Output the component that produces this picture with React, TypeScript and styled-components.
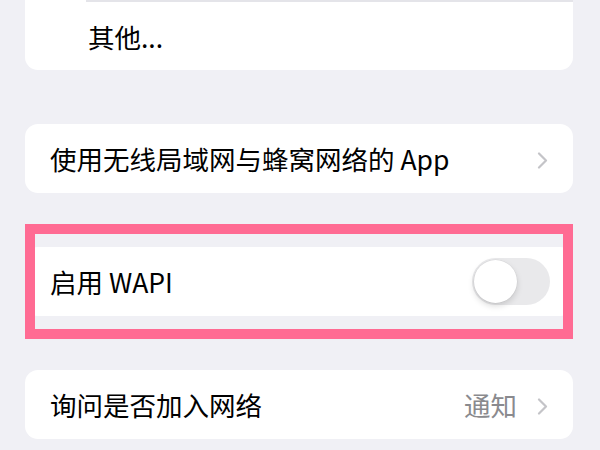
import styled, { createGlobalStyle } from "styled-components";

const GlobalStyle = createGlobalStyle`
  html, body {
    margin: 0;
    padding: 0;
    background: #f0f0f5;
    font-family: "Noto Sans CJK SC", "Noto Sans", sans-serif;
    color: #000;
  }
`;

const Page = styled.div`
  width: 600px;
  height: 450px;
  overflow: hidden;
  display: flex;
  flex-direction: column;
  gap: 54px;
  padding: 0 27px 0 25px;
  box-sizing: border-box;
`;

const Card = styled.div<{ $cutTop?: boolean }>`
  background: #ffffff;
  border-radius: ${(p) => (p.$cutTop ? "0 0 13px 13px" : "13px")};
  overflow: hidden;
`;

const Row = styled.div`
  height: 69px;
  display: flex;
  align-items: center;
  padding: 0 25px;
  box-sizing: border-box;
`;

const NestedRow = styled(Row)`
  height: 70px;
  margin-left: 61px;
  padding-left: 2px;
  border-top: 2px solid #e4e4e9;
`;

const Label = styled.span`
  flex: 1;
  font-size: 26.5px;
  line-height: 1;
  padding-top: 2px;
`;

const Value = styled.span`
  font-size: 26.5px;
  line-height: 1;
  color: #8a8a8e;
  margin-right: 20px;
  padding-top: 2px;
`;

const Chevron = () => (
  <svg width="11" height="17" viewBox="0 0 11 17" style={{ marginTop: 3 }}>
    <path
      d="M2 1.5 L9 8.5 L2 15.5"
      fill="none"
      stroke="#c4c4c8"
      strokeWidth="2.2"
      strokeLinecap="round"
      strokeLinejoin="round"
    />
  </svg>
);

const Highlight = styled.div`
  position: relative;
  &::after {
    content: "";
    position: absolute;
    left: 0;
    right: 0;
    top: -23px;
    bottom: -23px;
    border: 10px solid #ff6b93;
    pointer-events: none;
  }
`;

const Toggle = styled.div<{ $on?: boolean }>`
  width: 78px;
  height: 47px;
  border-radius: 24px;
  background: ${(p) => (p.$on ? "#34c759" : "#e9e9eb")};
  position: relative;
  margin-right: -2px;
  &::before {
    content: "";
    position: absolute;
    top: 2px;
    left: ${(p) => (p.$on ? "33px" : "2px")};
    width: 43px;
    height: 43px;
    border-radius: 50%;
    background: #fff;
    box-shadow: 0 3px 6px rgba(0, 0, 0, 0.15), 0 0 0 0.5px rgba(0, 0, 0, 0.06);
  }
`;

export default function App() {
  return (
    <>
      <GlobalStyle />
      <Page>
        <Card $cutTop>
          <NestedRow>
            <Label>其他...</Label>
          </NestedRow>
        </Card>
        <Card>
          <Row>
            <Label>使用无线局域网与蜂窝网络的 App</Label>
            <Chevron />
          </Row>
        </Card>
        <Highlight>
          <Card>
            <Row>
              <Label>启用 WAPI</Label>
              <Toggle />
            </Row>
          </Card>
        </Highlight>
        <Card>
          <Row>
            <Label>询问是否加入网络</Label>
            <Value>通知</Value>
            <Chevron />
          </Row>
        </Card>
      </Page>
    </>
  );
}
